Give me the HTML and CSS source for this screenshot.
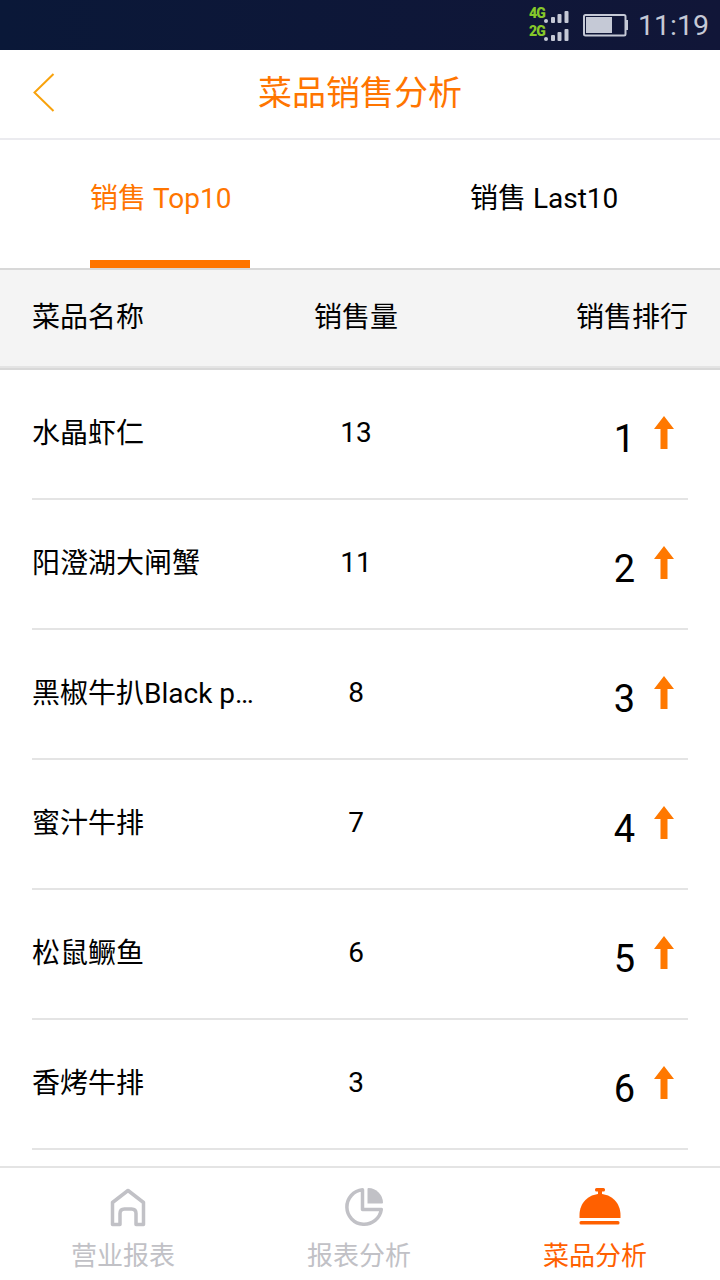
FILE: index.html
```html
<!DOCTYPE html>
<html lang="zh-CN">
<head>
  <meta charset="UTF-8">
  <meta name="viewport" content="width=device-width, initial-scale=1.0">
  <title>菜品销售分析</title>
  <link rel="stylesheet" href="styles.css">
</head>
<body>
  <div class="status-bar">
    <div class="signals">
      <div class="signal">
        <span>4G</span>
        <svg width="25" height="14" viewBox="0 0 25 14" fill="#c5c9d6">
          <rect x="0" y="9" width="4" height="4" rx="2"/>
          <rect x="7" y="7" width="4" height="6" rx="1"/>
          <rect x="13.500" y="4" width="4" height="9" rx="1"/>
          <rect x="20.500" y="1" width="4" height="12" rx="1"/>
        </svg>
      </div>
      <div class="signal">
        <span>2G</span>
        <svg width="25" height="14" viewBox="0 0 25 14" fill="#c5c9d6">
          <rect x="0" y="9" width="4" height="4" rx="2"/>
          <rect x="7" y="7" width="4" height="6" rx="1"/>
          <rect x="13.500" y="4" width="4" height="9" rx="1"/>
          <rect x="20.500" y="1" width="4" height="12" rx="1"/>
        </svg>
      </div>
    </div>
    <svg class="battery" width="46" height="23" viewBox="0 0 46 23">
      <rect x="1" y="1" width="41.500" height="20.500" rx="1.500" fill="none" stroke="#c5c9d6" stroke-width="2"/>
      <rect x="3" y="3" width="26" height="16" fill="#c5c9d6"/>
      <rect x="42.500" y="6" width="2.500" height="10" fill="#c5c9d6"/>
    </svg>
    <span class="time">11:19</span>
  </div>

  <div class="header">
    <svg class="back" width="24" height="40" viewBox="0 0 24 40">
      <path d="M21.500 1L2.500 19.500L21.500 38" fill="none" stroke="#f8a20c" stroke-width="2"/>
    </svg>
    <h1>菜品销售分析</h1>
  </div>

  <div class="tabs">
    <div class="tab active">销售 Top10</div>
    <div class="tab">销售 Last10</div>
  </div>

  <div class="table-head">
    <span class="name">菜品名称</span>
    <span class="count">销售量</span>
    <span class="rank-title">销售排行</span>
  </div>

  <div class="list">
    <div class="row">
      <span class="name">水晶虾仁</span>
      <span class="count">13</span>
      <span class="rank">1</span>
      <svg class="arrow" width="20" height="34" viewBox="0 0 20 34"><path d="M10 0L20 13H13.500V33H6.500V13H0Z"/></svg>
    </div>
    <div class="row">
      <span class="name">阳澄湖大闸蟹</span>
      <span class="count">11</span>
      <span class="rank">2</span>
      <svg class="arrow" width="20" height="34" viewBox="0 0 20 34"><path d="M10 0L20 13H13.500V33H6.500V13H0Z"/></svg>
    </div>
    <div class="row">
      <span class="name">黑椒牛扒Black p…</span>
      <span class="count">8</span>
      <span class="rank">3</span>
      <svg class="arrow" width="20" height="34" viewBox="0 0 20 34"><path d="M10 0L20 13H13.500V33H6.500V13H0Z"/></svg>
    </div>
    <div class="row">
      <span class="name">蜜汁牛排</span>
      <span class="count">7</span>
      <span class="rank">4</span>
      <svg class="arrow" width="20" height="34" viewBox="0 0 20 34"><path d="M10 0L20 13H13.500V33H6.500V13H0Z"/></svg>
    </div>
    <div class="row">
      <span class="name">松鼠鳜鱼</span>
      <span class="count">6</span>
      <span class="rank">5</span>
      <svg class="arrow" width="20" height="34" viewBox="0 0 20 34"><path d="M10 0L20 13H13.500V33H6.500V13H0Z"/></svg>
    </div>
    <div class="row">
      <span class="name">香烤牛排</span>
      <span class="count">3</span>
      <span class="rank">6</span>
      <svg class="arrow" width="20" height="34" viewBox="0 0 20 34"><path d="M10 0L20 13H13.500V33H6.500V13H0Z"/></svg>
    </div>
  </div>

  <div class="tab-bar">
    <div class="item">
      <svg width="44" height="42" viewBox="0 0 44 42" fill="none" stroke="#c1c1c6" stroke-width="3.500" stroke-linejoin="round">
        <path d="M22 4.500L37.500 16.500V38.500H30V27.500Q30 23 25.500 23H18.500Q14 23 14 27.500V38.500H6.500V16.500Z"/>
      </svg>
      <span>营业报表</span>
    </div>
    <div class="item">
      <svg width="44" height="42" viewBox="0 0 44 42">
        <path d="M20.500 3.800A17.300 17.300 0 1 0 39.300 23.500H20.500Z" fill="none" stroke="#c1c1c6" stroke-width="3.500" stroke-linejoin="round"/>
        <path d="M25.500 3Q25.500 2 26.500 2A15 15 0 0 1 41 16.500Q41 17.500 40 17.500H25.500Z" fill="#c1c1c6"/>
      </svg>
      <span>报表分析</span>
    </div>
    <div class="item active">
      <svg width="44" height="42" viewBox="0 0 44 42" fill="#ff6000">
        <rect x="17" y="2" width="10" height="3.500" rx="1.500"/>
        <rect x="20" y="4" width="4" height="6"/>
        <path d="M1.500 32V29C1.500 17 10.500 8 22 8S42.500 17 42.500 29V32Z"/>
        <rect x="1.500" y="35" width="40" height="3.500" rx="1.500"/>
      </svg>
      <span>菜品分析</span>
    </div>
  </div>
</body>
</html>
```
FILE: styles.css
```css
* {
  margin: 0;
  padding: 0;
  box-sizing: border-box;
}

body {
  width: 720px;
  height: 1280px;
  overflow: hidden;
  display: flex;
  flex-direction: column;
  background: #fff;
  color: #000;
  font-family: Roboto, "Noto Sans CJK SC", sans-serif;
  font-size: 28px;
  line-height: 40px;
}

svg {
  display: block;
  flex-shrink: 0;
}

/* status bar */
.status-bar {
  height: 50px;
  flex-shrink: 0;
  display: flex;
  justify-content: flex-end;
  align-items: center;
  padding-right: 12px;
  background: linear-gradient(90deg, #0a1838, #111638);
  color: #c5c9d6;
}

.signals {
  margin-right: 14px;
}

.signal {
  display: flex;
  height: 18px;
  align-items: center;
}

.signal span {
  width: 15px;
  color: #86c82a;
  font-size: 14px;
  font-weight: 900;
  line-height: 18px;
  letter-spacing: -0.8px;
  padding-bottom: 6px;
}

.signal svg {
  margin-top: 2px;
}

.battery {
  margin-right: 9px;
}

.time {
  width: 70px;
  padding-top: 2px;
  font-size: 28.5px;
  white-space: nowrap;
}

/* title */
.header {
  height: 90px;
  flex-shrink: 0;
  display: flex;
  padding: 23px 32px 0;
  border-bottom: 2px solid #ebebef;
}

h1 {
  flex: 1;
  padding-right: 24px;
  text-align: center;
  color: #ff7500;
  font-size: 34px;
  font-weight: 400;
}

/* tabs */
.tabs {
  height: 130px;
  flex-shrink: 0;
  display: flex;
  gap: 220px;
  padding: 39px 90px 0;
  border-bottom: 2px solid #d8d8d8;
}

.tab {
  width: 160px;
  white-space: nowrap;
}

.tab.active {
  color: #ff7500;
  border-bottom: 8px solid #ff7500;
}

/* table */
.table-head {
  height: 100px;
  flex-shrink: 0;
  display: flex;
  padding: 28px 32px 0;
  background: #f4f4f4;
  border-bottom: 2px solid #d8d8d8;
  box-shadow: inset 0 -2px #e4e4e4;
}

.name {
  width: 234px;
  white-space: nowrap;
}

.count {
  width: 180px;
  text-align: center;
}

.rank-title {
  flex: 1;
  text-align: right;
}

.list {
  height: 796px;
  flex-shrink: 0;
  padding: 0 32px;
}

.row {
  height: 130px;
  display: flex;
  padding-top: 43px;
  border-bottom: 2px solid #e4e4e4;
}

.row .name {
  padding-top: 1px;
}

.rank {
  width: 189px;
  padding-top: 6px;
  text-align: right;
  font-size: 38px;
}

.arrow {
  margin: 3px 0 0 19px;
  fill: #ff7800;
}

/* bottom navigation */
.tab-bar {
  height: 114px;
  flex-shrink: 0;
  display: flex;
  padding: 18px 7px 0 5px;
  border-top: 2px solid #e4e4e4;
}

.item {
  flex: 1;
  display: flex;
  flex-direction: column;
  align-items: center;
  color: #c1c1c6;
  font-size: 26px;
}

.item svg {
  margin: 0 0 8px 10px;
}

.item.active {
  color: #ff6000;
}
```
